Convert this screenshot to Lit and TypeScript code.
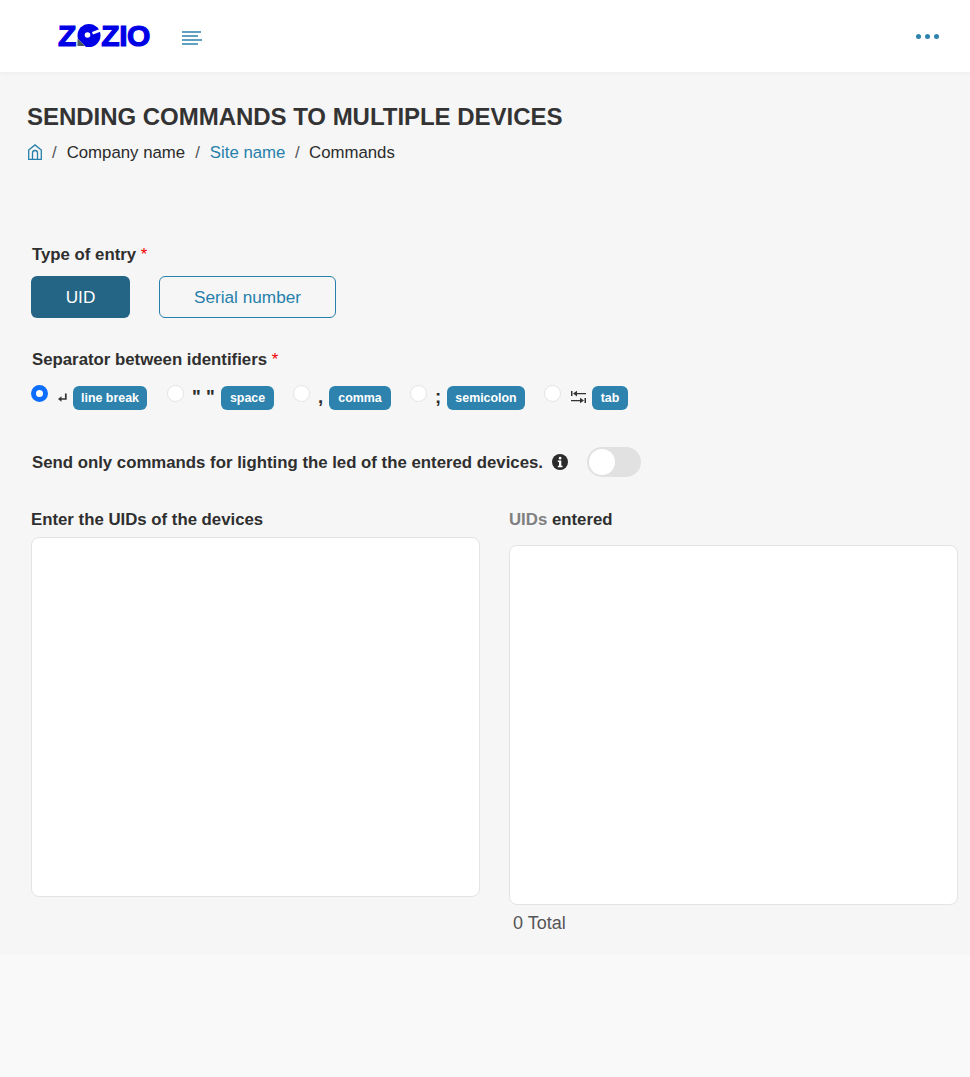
import { LitElement, html, css } from "lit";
import { customElement } from "lit/decorators.js";

const seps = [
  { sym: "enter", label: "line break", on: true, symW: 25, badgeW: 74 },
  { sym: '" "', label: "space", symW: 37, badgeW: 53 },
  { sym: ",", label: "comma", symW: 19, badgeW: 62 },
  { sym: ";", label: "semicolon", symW: 20, badgeW: 78 },
  { sym: "tab", label: "tab", symW: 31, badgeW: 36 },
];

@customElement("app-root")
export class AppRoot extends LitElement {
  static styles = css`
    :host { display: block; min-height: 1077px; background: #f9f9f9; font-family: "Liberation Sans", Arial, sans-serif; color: #2b2b2b; }
    header { height: 72px; background: #fff; display: flex; align-items: center; box-shadow: 0 1px 4px rgba(20,30,60,.05); position: relative; box-sizing: border-box; padding: 0 32px 0 58px; }
    .logo { display: flex; align-items: center; height: 24px; margin-top: -1px; color: #0000e6; font-weight: 700; font-size: 30px; line-height: 24px; -webkit-text-stroke: 1.200px #0000e6; }
    .logo svg { display: block; margin: 0 0 0 1px; }
    .logo .i { margin: 0 -.5px; }
    .menu { margin-left: 32px; margin-top: 3px; display: block; }
    .dots { margin-left: auto; display: flex; gap: 4px; margin-right: -1px; }
    .dots i { width: 5px; height: 5px; border-radius: 50%; background: #2d83ae; }
    main { background: #f6f6f6; height: 883px; box-sizing: border-box; padding: 31px 12px 0 27px; }
    h1 { margin: 0; font-size: 24px; line-height: 28px; font-weight: 700; color: #333; letter-spacing: -.03px; }
    .crumbs { display: flex; align-items: center; margin-top: 10px; font-size: 16.800px; height: 24px; color: #2b2b2b; }
    .crumbs a { color: #2680ab; }
    .crumbs .s { margin: 0 10px; color: #555; }
    .crumbs .s.last { margin: 0 9.500px; }
    .home { margin: -3px 0 0 1px; }
    form { padding: 0 0 0 4px; margin-top: 80px; }
    .lab { font-size: 16.800px; font-weight: 700; line-height: 20px; margin-left: 1px; color: #2f2f2f; }
    .lab b { color: #f00000; font-weight: 400; }
    .types { display: flex; gap: 29px; margin-top: 11px; }
    .btn { height: 42px; box-sizing: border-box; border-radius: 6px; font-size: 17.200px; display: flex; align-items: center; justify-content: center; }
    .btn.a { width: 99px; background: #246586; color: #fff; }
    .btn.b { width: 177px; border: 1px solid #2680ab; color: #2680ab; }
    .sep { margin-top: 32px; }
    .opts { display: flex; margin-top: 15px; }
    .opt { display: flex; align-items: flex-start; margin-right: 19px; }
    .opt:first-child { margin-right: 20px; }
    .radio { width: 17px; height: 17px; box-sizing: border-box; border-radius: 50%; background: #fff; border: 1px solid #e2e4e8; flex: none; }
    .radio.on { border: 5px solid #0d6efd; }
    .sym { font-weight: 700; font-size: 18.500px; box-sizing: border-box; padding-left: 8px; height: 24px; line-height: 24px; display: flex; align-items: center; flex: none; }
    .sym svg { margin-left: 2px; }
    .badge { background: #2d83ae; color: #fff; font-size: 12.400px; font-weight: 700; height: 24px; line-height: 24px; text-align: center; border-radius: 6px; margin-top: 1px; flex: none; }
    .led { display: flex; align-items: center; margin-top: 37px; height: 30px; }
    .led .t { font-size: 16.800px; font-weight: 700; margin-left: 1px; padding-top: 1px; color: #2f2f2f; }
    .led svg { margin-left: 9px; }
    .sw { width: 54px; height: 30px; border-radius: 15px; background: #e1e1e1; margin-left: 19px; position: relative; }
    .sw i { position: absolute; left: 2px; top: 2px; width: 26px; height: 26px; border-radius: 50%; background: #fff; }
    .cols { display: grid; grid-template-columns: 449px 449px; column-gap: 29px; margin-top: 33px; }
    .cols h2 { margin: 0; font-size: 16.800px; line-height: 20px; font-weight: 700; color: #2f2f2f; }
    .cols h2 span { color: #808080; }
    .box { background: #fff; border: 1px solid #e3e4e8; border-radius: 8px; box-sizing: border-box; height: 360px; margin-top: 7px; }
    .cols .r .box { margin-top: 15px; }
    .total { margin: 8px 0 0 4px; font-size: 18px; line-height: 20px; color: #555; }
  `;

  private sym(s: string) {
    if (s === "enter")
      return html`<svg width="9" height="11" viewBox="0 0 9 11"><path d="M7.800 1.500V7H2.500" fill="none" stroke="#333" stroke-width="1.700"/><path d="M0 7L3.500 4.200V9.800Z" fill="#333"/></svg>`;
    if (s === "tab")
      return html`<svg width="15" height="14" viewBox="0 0 15 14" fill="#333"><path d="M0 1h1.500v5H0zM2 3.500 6 .8v2.200h9v1.200H6v2.200zM13.500 8H15v5h-1.500zM13 10.500 9 7.800V10H0v1.200h9v2z"/></svg>`;
    return s;
  }

  render() {
    return html`
      <header>
        <div class="logo">
          <span>Z</span>
          <svg width="24" height="23" viewBox="0 0 24 23">
            <circle cx="12" cy="11.500" r="11.500" fill="#0000e6"/>
            <path d="M0 14 8 22V23H0Z" fill="#fff"/>
            <path d="M0.500 14.500 8 22H0.500Z" fill="#4a5a60"/>
            <circle cx="10.500" cy="11" r="2.800" fill="#fff"/>
            <path d="M15 8 24 4.500V7.500L16 10.500Z" fill="#fff"/>
          </svg>
          <span>Z</span><span class="i">I</span><span>O</span>
        </div>
        <svg class="menu" width="20" height="14" viewBox="0 0 20 14" stroke="#2d83ae" stroke-width="1.700" fill="none">
          <path d="M0 1h19M0 5h16M0 9h20M0 13h16"/>
        </svg>
        <div class="dots"><i></i><i></i><i></i></div>
      </header>
      <main>
        <h1>SENDING COMMANDS TO MULTIPLE DEVICES</h1>
        <div class="crumbs">
          <svg class="home" width="14" height="16" viewBox="0 0 14 16" fill="none" stroke="#2680ab" stroke-width="1.300"><path d="M.7 6 7 .9 13.300 6v9.300H.7zM4.500 15.300V9a2.500 2.500 0 0 1 5 0v6.300"/></svg>
          <span class="s">/</span><span>Company name</span>
          <span class="s">/</span><a>Site name</a>
          <span class="s last">/</span><span>Commands</span>
        </div>
        <form>
          <div class="lab">Type of entry <b>*</b></div>
          <div class="types"><div class="btn a">UID</div><div class="btn b">Serial number</div></div>
          <div class="lab sep">Separator between identifiers <b>*</b></div>
          <div class="opts">
            ${seps.map(o => html`<div class="opt"><span class="radio ${o.on ? "on" : ""}"></span><span class="sym" style="width:${o.symW}px">${this.sym(o.sym)}</span><span class="badge" style="width:${o.badgeW}px">${o.label}</span></div>`)}
          </div>
          <div class="led">
            <span class="t">Send only commands for lighting the led of the entered devices.</span>
            <svg width="16" height="16" viewBox="0 0 16 16"><circle cx="8" cy="8" r="8" fill="#2b2b2b"/><rect x="6.800" y="2.800" width="2.600" height="2.600" rx="1.200" fill="#fff"/><path d="M5.800 6.500h3.500v5.200h1.200v1.500H5.800v-1.500H7V8H5.800z" fill="#fff"/></svg>
            <div class="sw"><i></i></div>
          </div>
          <div class="cols">
            <div><h2>Enter the UIDs of the devices</h2><div class="box"></div></div>
            <div class="r"><h2><span>UIDs</span> entered</h2><div class="box"></div><div class="total">0 Total</div></div>
          </div>
        </form>
      </main>
    `;
  }
}
